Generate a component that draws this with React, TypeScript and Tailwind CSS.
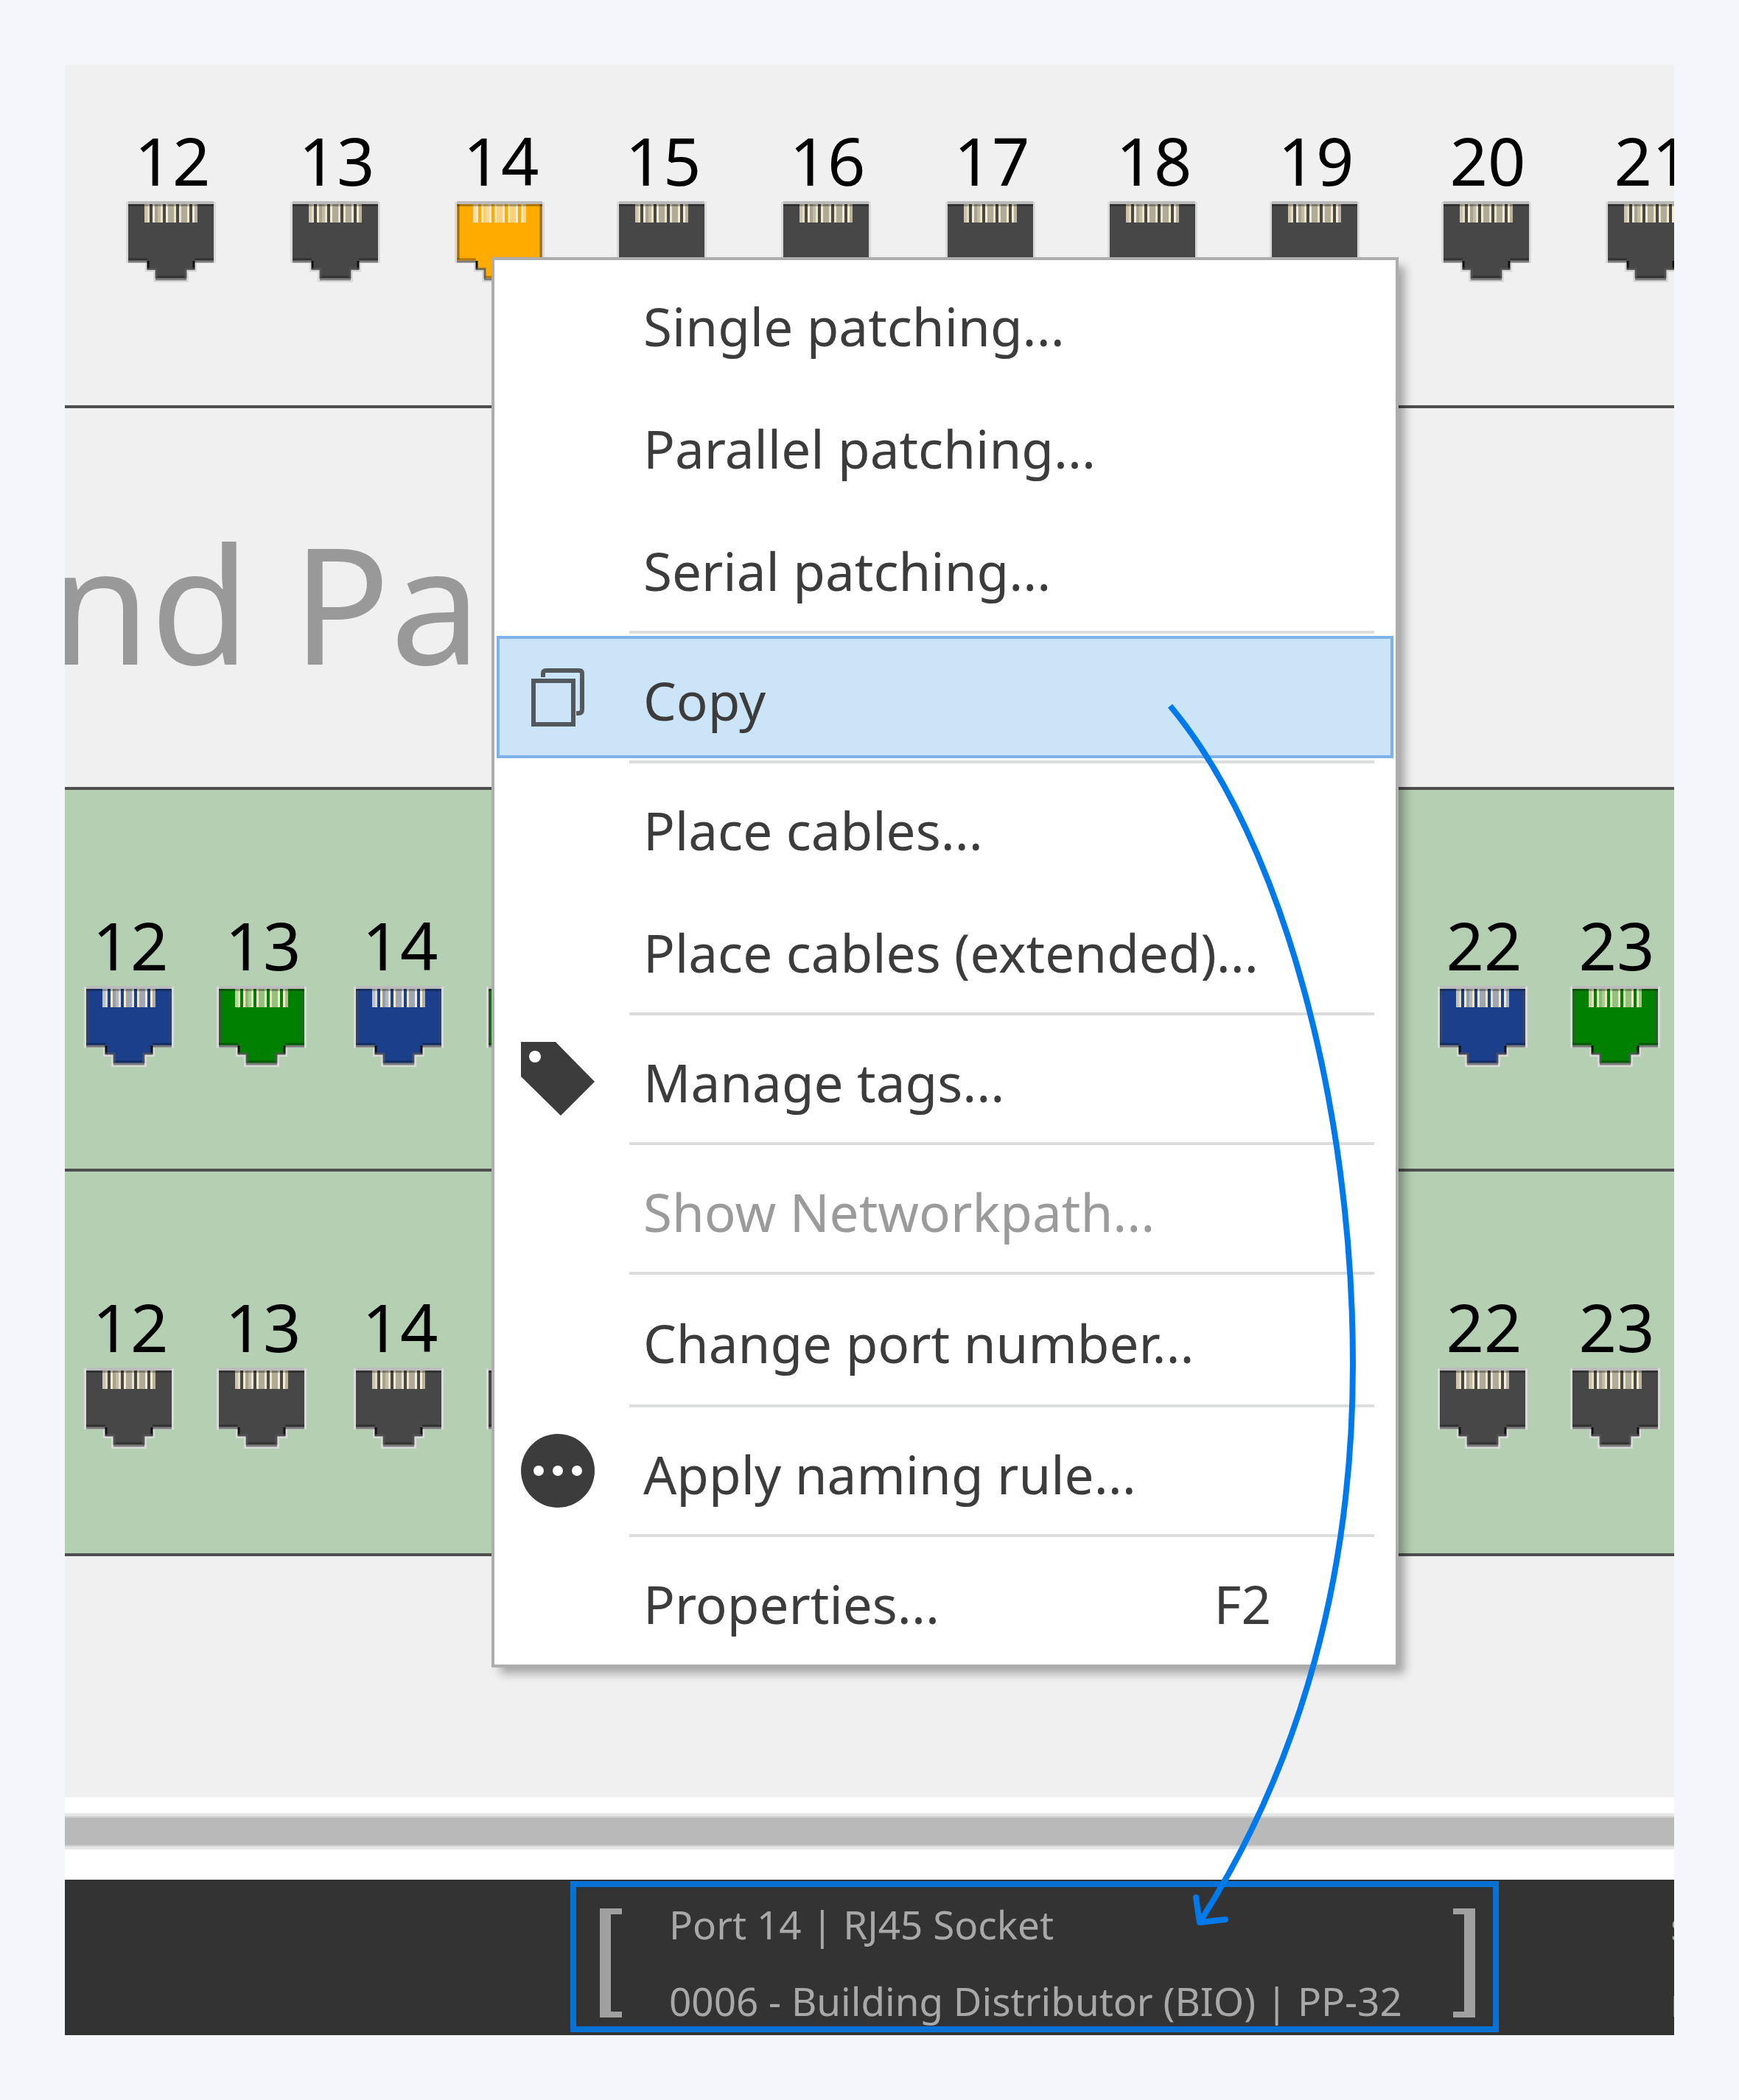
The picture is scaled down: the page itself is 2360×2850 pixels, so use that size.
type PortItem = {
  label?: string;
  color: string;
  gap: string;
};

const DARK = "#474747";
const BLUE = "#1b3f8b";
const GREEN = "#008000";
const ORANGE = "#ffab00";

const topPorts: PortItem[] = [
  { label: "12", color: DARK, gap: "ml-[82px]" },
  { label: "13", color: DARK, gap: "ml-[99px]" },
  { label: "14", color: ORANGE, gap: "ml-[99px]" },
  { label: "15", color: DARK, gap: "ml-[96px]" },
  { label: "16", color: DARK, gap: "ml-[99px]" },
  { label: "17", color: DARK, gap: "ml-[99px]" },
  { label: "18", color: DARK, gap: "ml-[96px]" },
  { label: "19", color: DARK, gap: "ml-[96px]" },
  { label: "20", color: DARK, gap: "ml-[109px]" },
  { label: "21", color: DARK, gap: "ml-[99px]" },
];

const patchedPorts: PortItem[] = [
  { label: "12", color: BLUE, gap: "ml-[25px]" },
  { label: "13", color: GREEN, gap: "ml-14" },
  { label: "14", color: BLUE, gap: "ml-[62px]" },
  { color: GREEN, gap: "ml-14" },
  { label: "22", color: BLUE, gap: "ml-[1167px]" },
  { label: "23", color: GREEN, gap: "ml-14" },
];

const freePorts = patchedPorts.map((port) => ({ ...port, color: DARK }));

// opacity of each contact stripe, left to right
const contacts = [
  0.75, 0.9, 0, 1, 0.55, 0.7, 0.95, 0, 1, 0.6, 0.6, 0.95, 0, 0.95, 0.6, 0.6, 1, 0, 1, 0.65,
];

const menu = [
  [{ text: "Single patching..." }, { text: "Parallel patching..." }, { text: "Serial patching..." }],
  [{ text: "Copy", icon: "copy", active: true }],
  [{ text: "Place cables..." }, { text: "Place cables (extended)..." }],
  [{ text: "Manage tags...", icon: "tag" }],
  [{ text: "Show Networkpath...", disabled: true }],
  [{ text: "Change port number...", tall: true }],
  [{ text: "Apply naming rule...", icon: "more" }],
  [{ text: "Properties...", shortcut: "F2" }],
] as {
  text: string;
  icon?: string;
  active?: boolean;
  disabled?: boolean;
  tall?: boolean;
  shortcut?: string;
}[][];

function Jack({ color }: { color: string }) {
  const shape = "M0 0H116V77H90V89H79V103H37V89H26V77H0Z";
  return (
    <svg viewBox="-4 -4 124 112" className="block h-[112px] w-[124px]" aria-hidden="true">
      <path d={shape} fill="none" stroke="#dadada" strokeWidth="6" />
      <path d="M0 -2H116" stroke="#bcbcbc" strokeWidth="4" />
      <path d={shape} fill={color} />
      <path d="M2 0V75M114 0V75" stroke="#474747" strokeOpacity="0.6" strokeWidth="3" />
      {contacts.map((opacity, i) => (
        <rect
          key={i}
          x={22 + i * 3.6}
          y="0"
          width="3.6"
          height="25"
          fill="#f6edce"
          fillOpacity={opacity}
          shapeRendering="crispEdges"
        />
      ))}
      <path d="M0 1.5H116M0 75H26M90 75H116M37 99H79" stroke="#000" strokeOpacity="0.3" strokeWidth="3" />
      <path d="M0 78H26M90 78H116M37 102H79" stroke="#7c7c7c" strokeWidth="3" />
      <path d="M27 77V89M89 77V89" stroke="#111" strokeWidth="3" />
      <path d="M26 88H38V101M90 88H78V101" fill="none" stroke="#555" strokeOpacity="0.8" strokeWidth="3" />
    </svg>
  );
}

function PortRow({ ports }: { ports: PortItem[] }) {
  return (
    <div className="flex">
      {ports.map((port, i) => (
        <div key={i} className={`${port.gap} w-[124px] shrink-0`}>
          <div className="mb-[11px] h-[90px] pl-1 text-center text-[90px] leading-none text-black">{port.label}</div>
          <Jack color={port.color} />
        </div>
      ))}
    </div>
  );
}

function MenuIcon({ name }: { name?: string }) {
  return (
    <svg viewBox="0 0 100 100" className="h-[100px] w-[100px] shrink-0" aria-hidden="true">
      {name === "copy" && (
        <g fill="none" stroke="#53585c" strokeWidth="6">
          <rect x="17" y="28" width="54" height="59" />
          <path d="M30 23V18Q30 14 34 14H79Q83 14 83 18V67Q83 72 78 72H75" />
        </g>
      )}
      {name === "tag" && (
        <>
          <path d="M0 0H47L100 54L54 100L0 47Z" fill="#3c3c3c" />
          <circle cx="19" cy="20" r="8" fill="#fff" />
        </>
      )}
      {name === "more" && (
        <>
          <circle cx="50" cy="50" r="50" fill="#3c3c3c" />
          <circle cx="24" cy="50" r="7" fill="#fff" />
          <circle cx="50" cy="50" r="7" fill="#fff" />
          <circle cx="76" cy="50" r="7" fill="#fff" />
        </>
      )}
    </svg>
  );
}

function ContextMenu() {
  return (
    <div
      role="menu"
      className="absolute top-[261px] left-[579px] w-[1231px] border-4 border-[#adadad] bg-white px-[3px] pt-0.5 pb-1 shadow-[10px_10px_12px_-2px_rgba(0,0,0,0.32)]"
    >
      {menu.map((group, g) => (
        <div key={g}>
          {g > 0 && <div className="mr-[26px] ml-[180px] py-[3px]"><div className="h-1 bg-[#dcdddd]" /></div>}
          {group.map((item) => (
            <button
              key={item.text}
              type="button"
              role="menuitem"
              disabled={item.disabled}
              className={`flex w-full items-center border-4 pr-[162px] pl-[29px] text-left text-[71px] leading-none ${
                item.tall ? "h-[170px]" : "h-[166px]"
              } ${item.active ? "border-[#7eb3ea] bg-[#cce4f7]" : "border-transparent"} ${
                item.disabled ? "text-[#9b9b9b]" : "text-[#3c3c3c]"
              }`}
            >
              <MenuIcon name={item.icon} />
              <span className="ml-[66px] flex-1 pt-2">{item.text}</span>
              {item.shortcut && <span className="pt-2">{item.shortcut}</span>}
            </button>
          ))}
        </div>
      ))}
    </div>
  );
}

function StatusBar() {
  return (
    <footer className="flex h-[211px] bg-[#333333] pt-0.5 pl-[686px] text-[53px] leading-[104px] whitespace-nowrap text-[#a8a8a8]">
      <div className="flex h-[205px] w-[1260px] shrink-0 items-center justify-between border-8 border-[#0672d6] px-6">
        <div className="mt-4 ml-2 h-[148px] w-[30px] border-y-8 border-l-[15px] border-[#a0a0a0]" />
        <div className="ml-16 flex-1 pt-4">
          <p>Port 14 | RJ45 Socket</p>
          <p>0006 - Building Distributor (BIO) | PP-32</p>
        </div>
        <div className="mt-4 h-[148px] w-[30px] border-y-8 border-r-[15px] border-[#a0a0a0]" />
      </div>
      <div className="ml-[233px] w-1 pt-2">
        <p>s</p>
        <p>r</p>
      </div>
    </footer>
  );
}

export default function App() {
  return (
    <main className="min-h-screen bg-[#f4f6fb] p-[88px] font-['Noto_Sans','Open_Sans',sans-serif]">
      <div className="relative overflow-hidden bg-[#f0f0f0]">

        {/* Rack units */}
        <section className="h-[466px] border-b-4 border-[#4f4f4f] pt-[84px]">
          <PortRow ports={topPorts} />
        </section>
        <section className="flex h-[518px] items-center border-b-4 border-[#4f4f4f]">
          <span className="-ml-5 pt-3 text-[220px] leading-none whitespace-nowrap text-[#999999]">nd Pa</span>
        </section>
        <section className="h-[518px] border-b-4 border-[#4f4f4f] bg-[#b5cfb2] pt-[165px]">
          <PortRow ports={patchedPorts} />
        </section>
        <section className="h-[522px] border-b-4 border-[#4f4f4f] bg-[#b5cfb2] pt-[165px]">
          <PortRow ports={freePorts} />
        </section>
        <div className="h-[327px]" />

        {/* Splitter */}
        <div className="bg-white pt-[22px] pb-[41px]">
          <div className="border-y-4 border-[#e6e6e6]">
            <div className="h-[41px] border-y-2 border-[#cfcfcf] bg-[#b9b9b9]" />
          </div>
        </div>

        <StatusBar />

        <ContextMenu />

        {/* Arrow from the Copy entry to the copied port */}
        <svg
          viewBox="1560 940 300 1700"
          className="pointer-events-none absolute top-[852px] left-[1472px] h-[1700px] w-[300px]"
          aria-hidden="true"
        >
          <g fill="none" stroke="#007aea" strokeWidth="8">
            <path d="M1588 958C1740 1140 1836 1500 1836 1851C1836 2130 1768 2390 1628 2609" />
            <path d="M1623 2575L1628 2609L1663 2605" strokeLinecap="round" strokeLinejoin="round" />
          </g>
        </svg>
      </div>
    </main>
  );
}
